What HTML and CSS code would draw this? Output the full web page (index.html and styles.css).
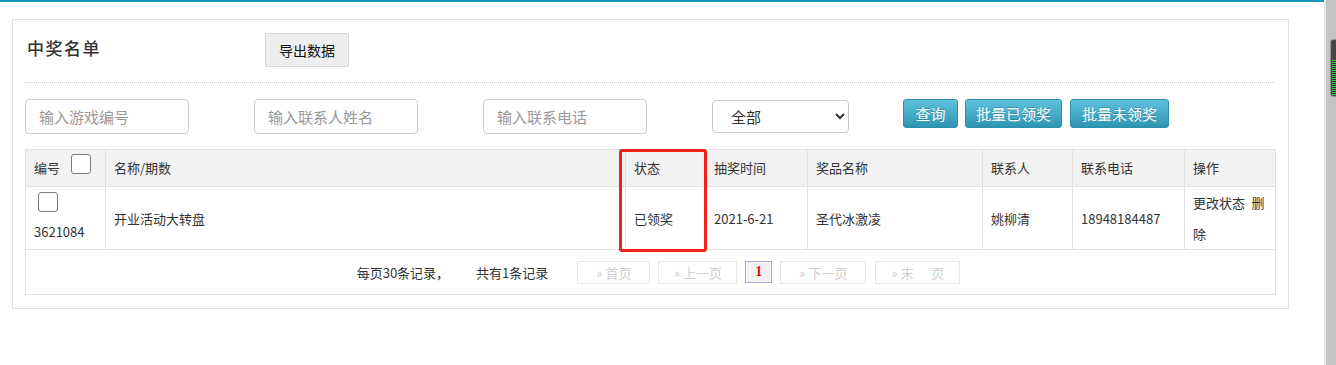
FILE: index.html
```html
<!DOCTYPE html>
<html lang="zh-CN">
<head>
<meta charset="utf-8">
<title>中奖名单</title>
<link rel="stylesheet" href="styles.css">
</head>
<body>
<div class="page">
  <div class="main">
    <div class="panel">
      <div class="panel-head">
        <h2 class="title">中奖名单</h2>
        <button class="btn-export" type="button">导出数据</button>
      </div>
      <div class="filters">
        <input class="field" type="text" placeholder="输入游戏编号">
        <input class="field" type="text" placeholder="输入联系人姓名">
        <input class="field" type="text" placeholder="输入联系电话">
        <select class="select">
          <option>全部</option>
          <option>已领奖</option>
          <option>未领奖</option>
        </select>
        <div class="actions">
          <button class="btn-info btn-query" type="button">查询</button>
          <button class="btn-info" type="button">批量已领奖</button>
          <button class="btn-info btn-last" type="button">批量未领奖</button>
        </div>
      </div>
      <div class="table-wrap">
        <table class="list">
          <colgroup>
            <col class="c-id"><col class="c-name"><col class="c-state"><col class="c-time">
            <col class="c-prize"><col class="c-contact"><col class="c-phone"><col class="c-op">
          </colgroup>
          <thead>
            <tr>
              <th>编号<input class="chk chk-head" type="checkbox"></th>
              <th>名称/期数</th>
              <th>状态</th>
              <th>抽奖时间</th>
              <th>奖品名称</th>
              <th>联系人</th>
              <th>联系电话</th>
              <th>操作</th>
            </tr>
          </thead>
          <tbody>
            <tr>
              <td class="cell-id"><input class="chk chk-row" type="checkbox"><div class="num">3621084</div></td>
              <td>开业活动大转盘</td>
              <td>已领奖</td>
              <td>2021-6-21</td>
              <td>圣代冰激凌</td>
              <td>姚柳清</td>
              <td>18948184487</td>
              <td class="cell-op">更改状态&ensp;删除</td>
            </tr>
            <tr>
              <td class="pager-cell" colspan="8">
                <div class="pager">
                  <span class="pg-info">每页30条记录，</span>
                  <span class="pg-info pg-total">共有1条记录</span>
                  <span class="pg-btn pg-first">» 首页</span>
                  <span class="pg-btn pg-prev">» 上一页</span>
                  <span class="pg-btn pg-cur">1</span>
                  <span class="pg-btn pg-next">» 下一页</span>
                  <span class="pg-btn pg-last">» 末&nbsp;&nbsp;&nbsp;&nbsp;&nbsp;&nbsp;页</span>
                </div>
              </td>
            </tr>
          </tbody>
        </table>
        <div class="mark"></div>
      </div>
    </div>
  </div>
  <div class="side">
    <div class="handle"><div class="meter"></div></div>
  </div>
</div>
</body>
</html>
```

FILE: styles.css
```css
html, body {
  margin: 0;
  padding: 0;
  background: #fff;
}
body {
  font-family: "Noto Sans CJK SC", "Noto Sans", sans-serif;
  color: #333;
  overflow: hidden;
}
.page {
  display: flex;
  height: 365px;
}
.main {
  flex: 1;
  min-width: 0;
  border-top: 2px solid #1597b9;
}
.panel {
  margin: 17px 35px 0 12px;
  border: 1px solid #e2e2e2;
  padding: 13px 13px 13px 12px;
}
.panel-head {
  display: flex;
  align-items: flex-start;
  padding-bottom: 15px;
  border-bottom: 1px dotted #c4c4c4;
}
.title {
  margin: 0;
  width: 238px;
  padding-left: 2px;
  font-size: 17px;
  font-weight: 500;
  letter-spacing: 1.5px;
  line-height: 30px;
  color: #333;
}
.btn-export {
  width: 84px;
  height: 34px;
  padding: 0;
  background: #eeeeee;
  border: 1px solid #d9d9d9;
  border-radius: 0;
  font-family: inherit;
  font-size: 14px;
  color: #111;
}
.filters {
  display: flex;
  align-items: flex-start;
  margin-top: 16px;
}
.field {
  width: 164px;
  height: 35px;
  box-sizing: border-box;
  border: 1px solid #cccccc;
  border-radius: 4px;
  padding: 0 13px;
  margin: 0 65px 0 0;
  font-family: inherit;
  font-size: 15px;
  color: #333;
  outline: none;
}
.field::placeholder {
  color: #999;
}
.select {
  width: 137px;
  height: 33px;
  box-sizing: border-box;
  margin: 1px 54px 0 0;
  border: 1px solid #cccccc;
  border-radius: 4px;
  padding: 0 0 0 14px;
  background: #fff;
  font-family: inherit;
  font-size: 15px;
  color: #333;
}
.actions {
  display: flex;
  gap: 7px;
}
.btn-info {
  height: 29px;
  padding: 0 10px;
  border: 1px solid #2b8fad;
  border-radius: 3px;
  background: linear-gradient(to bottom, #5ec2df 0%, #2f95b3 100%);
  color: #fff;
  font-family: inherit;
  font-size: 15px;
  line-height: 27px;
  text-shadow: 0 -1px 0 rgba(0, 0, 0, 0.2);
}
.btn-query {
  min-width: 55px;
}
.btn-last {
  margin-left: 1px;
  padding: 0 11px;
}
.table-wrap {
  position: relative;
  margin-top: 15px;
}
.list {
  width: 1250px;
  table-layout: fixed;
  border-collapse: collapse;
  font-size: 13px;
  color: #333;
}
.c-id { width: 80px; }
.c-name { width: 520px; }
.c-state { width: 80px; }
.c-time { width: 102px; }
.c-prize { width: 175px; }
.c-contact { width: 90px; }
.c-phone { width: 112px; }
.c-op { width: 91px; }
.list th {
  background: #f2f2f2;
  font-weight: normal;
  text-align: left;
  padding: 8px;
  line-height: 20px;
  border: 1px solid #e2e2e2;
}
.list td {
  padding: 0 8px;
  line-height: 31px;
  border: 1px solid #e2e2e2;
  vertical-align: middle;
}
.chk {
  appearance: none;
  -webkit-appearance: none;
  width: 20px;
  height: 20px;
  box-sizing: border-box;
  border: 1px solid #7a7a7a;
  border-radius: 3px;
  background: #fff;
  margin: 0;
}
.chk-head {
  vertical-align: top;
  margin: -4px 0 0 11px;
}
.list td.cell-id {
  vertical-align: top;
  padding-top: 5px;
  line-height: 20px;
}
.chk-row {
  display: block;
  margin-left: 4px;
}
.num {
  margin-top: 10px;
  line-height: 20px;
}
.list td.pager-cell {
  padding: 10px 8px;
  line-height: normal;
}
.pager {
  display: flex;
  justify-content: center;
  align-items: center;
  height: 24px;
  padding-left: 16px;
  font-size: 13px;
}
.pg-total {
  margin-left: 27px;
}
.pg-btn {
  display: flex;
  align-items: center;
  justify-content: center;
  box-sizing: border-box;
  height: 23px;
  margin-left: 8px;
  border: 1px solid #e6e6e6;
  color: #cfcfcf;
  font-size: 13px;
}
.pg-first { width: 73px; margin-left: 29px; }
.pg-prev { width: 79px; }
.pg-cur {
  width: 27px;
  height: 22px;
  background: #f2f2f2;
  border-color: #aaa9d8;
  color: #f00;
  font-family: "Liberation Serif", serif;
  font-weight: bold;
  font-size: 14px;
}
.pg-next { width: 86px; }
.pg-last { width: 85px; margin-left: 9px; }
.mark {
  position: absolute;
  left: 594px;
  top: 0;
  width: 88px;
  height: 103px;
  box-sizing: border-box;
  border: 3px solid #f3211c;
  border-radius: 3px;
  pointer-events: none;
}
.side {
  width: 12px;
  flex: none;
  box-sizing: border-box;
  background: #c3c3c3;
  border-left: 2px solid #e6e6e6;
  padding: 39px 0 0 4px;
  overflow: hidden;
}
.handle {
  width: 10px;
  height: 58px;
  box-sizing: border-box;
  background: #474747;
  border: 1px solid #9a9a9a;
  border-radius: 3px;
  padding: 20px 0 0 1px;
}
.meter {
  height: 35px;
  background: repeating-linear-gradient(to bottom, #35d04b 0, #35d04b 1px, #2b2b2b 1px, #2b2b2b 2px);
}
```
